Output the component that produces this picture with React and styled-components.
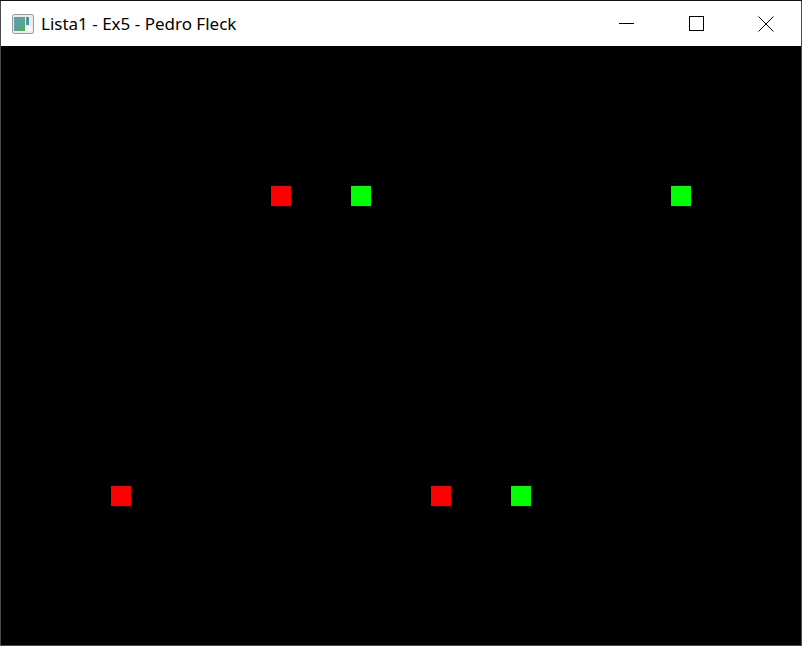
import React from 'react';
import styled, { createGlobalStyle } from 'styled-components';

const Global = createGlobalStyle`
  html, body {
    margin: 0;
    padding: 0;
    background: #101010;
    overflow: hidden;
  }
`;

const Screen = styled.div`
  width: 802px;
  height: 646px;
  padding-top: 1px;
  box-sizing: border-box;
  background: #141414;
`;

const Window = styled.div`
  height: 645px;
  box-sizing: border-box;
  border: 1px solid #4a4a4a;
  border-top: none;
  display: flex;
  flex-direction: column;
  background: #000;
`;

const TitleBar = styled.div`
  height: 45px;
  flex: none;
  background: #fff;
  display: flex;
  align-items: center;
  font-family: 'Noto Sans', 'Open Sans', sans-serif;
  font-size: 17px;
  color: #000;
`;

const AppIcon = styled.svg`
  margin-left: 11px;
  margin-right: 7px;
  flex: none;
`;

const Title = styled.span`
  flex: 1;
  white-space: nowrap;
  padding-bottom: 1px;
`;

const Buttons = styled.div`
  display: flex;
  height: 100%;
`;

const CaptionButton = styled.div`
  width: 70px;
  height: 100%;
  display: flex;
  align-items: center;
  justify-content: center;
`;

const Canvas = styled.div`
  position: relative;
  flex: 1;
  background: #000;
  overflow: hidden;
`;

const Square = styled.div`
  position: absolute;
  width: 20px;
  height: 20px;
  background: ${p => (p.$on ? '#00ff00' : '#ff0000')};
`;

const squares = [
  { x: 270, y: 140, on: false },
  { x: 350, y: 140, on: true },
  { x: 670, y: 140, on: true },
  { x: 110, y: 440, on: false },
  { x: 430, y: 440, on: false },
  { x: 510, y: 440, on: true },
];

const Icon = () => (
  <AppIcon width="22" height="20" viewBox="0 0 22 20">
    <defs>
      <linearGradient id="g" x1="0" y1="0" x2="1" y2="1">
        <stop offset="0" stopColor="#5a9fc4" />
        <stop offset="1" stopColor="#5aa862" />
      </linearGradient>
    </defs>
    <rect x="0.5" y="0.5" width="21" height="19" rx="2" fill="#ececec" stroke="#9a9a9a" />
    <rect x="2" y="3" width="11" height="14" fill="url(#g)" />
    <rect x="14" y="3" width="3" height="8" fill="#4a8fab" />
    <rect x="14" y="12" width="6" height="5" fill="#f7f7f7" />
  </AppIcon>
);

const App = () => (
  <>
    <Global />
    <Screen>
      <Window>
        <TitleBar>
          <Icon />
          <Title>Lista1 - Ex5 - Pedro Fleck</Title>
          <Buttons>
            <CaptionButton>
              <svg width="15" height="15" viewBox="0 0 15 15">
                <line x1="0" y1="7.5" x2="15" y2="7.5" stroke="#000" strokeWidth="1" />
              </svg>
            </CaptionButton>
            <CaptionButton>
              <svg width="15" height="15" viewBox="0 0 15 15">
                <rect x="0.5" y="0.5" width="14" height="14" fill="none" stroke="#000" strokeWidth="1" />
              </svg>
            </CaptionButton>
            <CaptionButton>
              <svg width="16" height="16" viewBox="0 0 16 16">
                <path d="M0.5 0.5 L15.5 15.5 M15.5 0.5 L0.5 15.5" stroke="#000" strokeWidth="1" />
              </svg>
            </CaptionButton>
          </Buttons>
        </TitleBar>
        <Canvas>
          {squares.map((s, i) => (
            <Square key={i} $on={s.on} style={{ left: s.x, top: s.y }} />
          ))}
        </Canvas>
      </Window>
    </Screen>
  </>
);

export default App;
